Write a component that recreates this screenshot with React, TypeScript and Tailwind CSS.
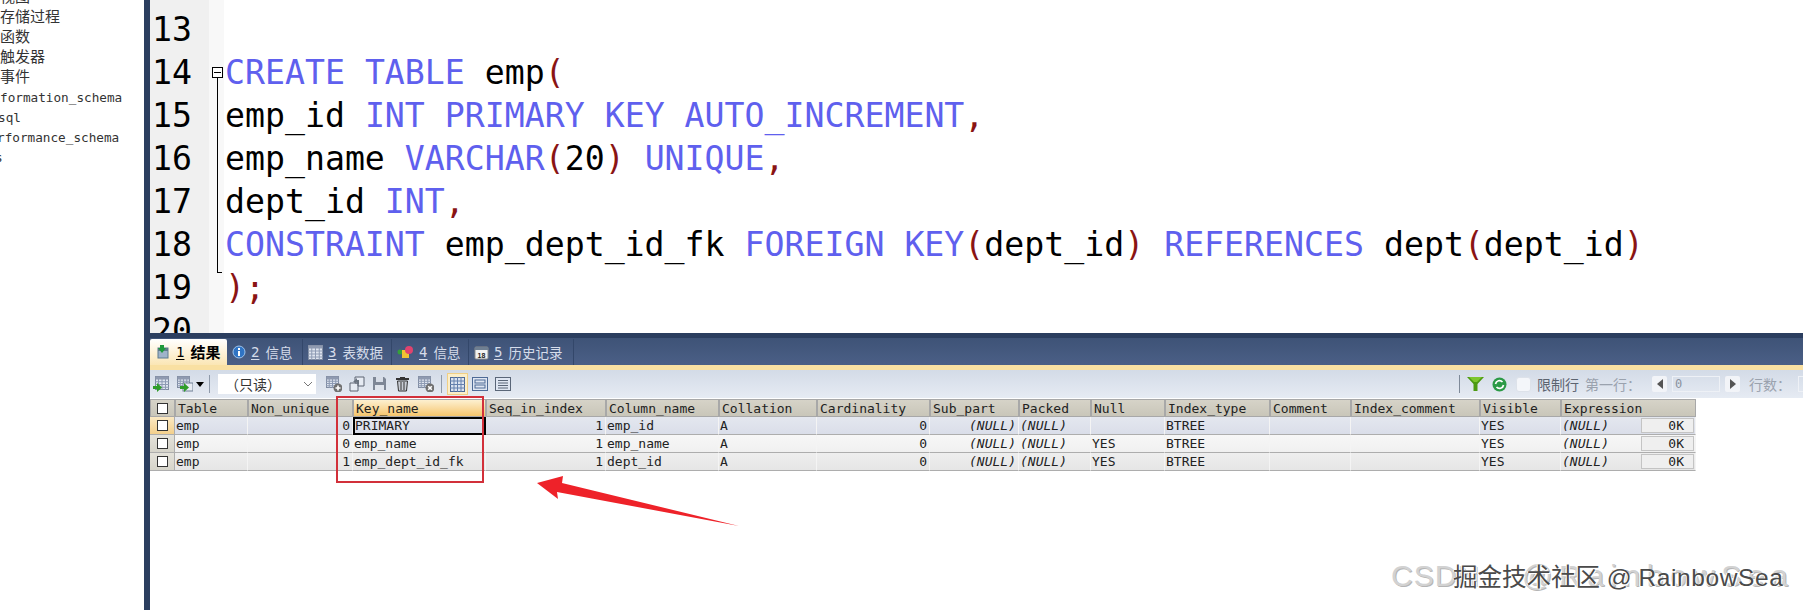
import React from "react";

const MONO = "font-['DejaVu_Sans_Mono','Noto_Sans_CJK_SC',monospace]";
const GRID =
  "grid grid-cols-[25px_73px_105px_133px_120px_113px_98px_113px_89px_72px_74px_105px_81px_129px_81px_135px]";

const K = ({ children }: { children: React.ReactNode }) => <span className="text-[#5f60ee]">{children}</span>;
const P = ({ children }: { children: React.ReactNode }) => <span className="text-[#8a1414]">{children}</span>;

const codeLines: React.ReactNode[] = [
  <>&nbsp;</>,
  <><K>CREATE</K> <K>TABLE</K> emp<P>(</P></>,
  <>emp_id <K>INT</K> <K>PRIMARY</K> <K>KEY</K> <K>AUTO_INCREMENT</K><P>,</P></>,
  <>emp_name <K>VARCHAR</K><P>(</P>20<P>)</P> <K>UNIQUE</K><P>,</P></>,
  <>dept_id <K>INT</K><P>,</P></>,
  <><K>CONSTRAINT</K> emp_dept_id_fk <K>FOREIGN</K> <K>KEY</K><P>(</P>dept_id<P>)</P> <K>REFERENCES</K> dept<P>(</P>dept_id<P>)</P></>,
  <><P>);</P></>,
];

const headers = ["Table","Non_unique","Key_name","Seq_in_index","Column_name","Collation","Cardinality","Sub_part","Packed","Null","Index_type","Comment","Index_comment","Visible","Expression"];

const rows = [
  { bg: "bg-linear-to-b from-[#e4e7ef] to-[#dadee9]", vals: ["emp","0","PRIMARY","1","emp_id","A","0","(NULL)","(NULL)","","BTREE","","","YES","(NULL)"] },
  { bg: "bg-linear-to-b from-[#f7f7f7] to-[#f0f0f0]", vals: ["emp","0","emp_name","1","emp_name","A","0","(NULL)","(NULL)","YES","BTREE","","","YES","(NULL)"] },
  { bg: "bg-linear-to-b from-[#eeeeee] to-[#e6e6e6]", vals: ["emp","1","emp_dept_id_fk","1","dept_id","A","0","(NULL)","(NULL)","YES","BTREE","","","YES","(NULL)"] },
];

const RIGHT = new Set([1, 3, 6, 7]);
const ITALIC = new Set([7, 8, 14]);

function TableGlyph({ x = 0, y = 0, w = 15, h = 14 }: { x?: number; y?: number; w?: number; h?: number }) {
  const cols = [1, 2, 3].map((i) => x + (w * i) / 4);
  const rws = [1, 2, 3].map((i) => y + 3 + ((h - 3) * i) / 4);
  return (
    <g>
      <rect x={x + 0.5} y={y + 0.5} width={w - 1} height={h - 1} fill="#dfe5ef" stroke="#7f8ba0" />
      <rect x={x + 0.5} y={y + 0.5} width={w - 1} height={3} fill="#8f9ab0" />
      {cols.map((c) => <line key={c} x1={c} x2={c} y1={y + 3} y2={y + h} stroke="#8d9ab3" />)}
      {rws.map((r) => <line key={r} x1={x} x2={x + w} y1={r} y2={r} stroke="#8d9ab3" />)}
    </g>
  );
}

const GreenArrow = ({ x, y }: { x: number; y: number }) => (
  <path transform={`translate(${x} ${y})`} d="M0 3h4V0l5 4.5L4 9V6H0z" fill="#2f9d2a" />
);

function Ic({ w = 16, h = 16, className = "", children }: { w?: number; h?: number; className?: string; children: React.ReactNode }) {
  return <svg width={w} height={h} viewBox={`0 0 ${w} ${h}`} className={"block shrink-0 " + className}>{children}</svg>;
}

function Badge({ kind }: { kind: "plus" | "x" }) {
  return (
    <g>
      <circle cx="12" cy="12" r="4.5" fill="#707070" />
      {kind === "plus" ? (
        <path d="M12 9.5v5M9.5 12h5" stroke="#fff" strokeWidth="1.6" />
      ) : (
        <path d="M10.2 10.2l3.6 3.6M13.8 10.2l-3.6 3.6" stroke="#fff" strokeWidth="1.6" />
      )}
    </g>
  );
}

function Tab({ w, active, icon, n, label }: { w: string; active?: boolean; icon: React.ReactNode; n: string; label: string }) {
  return (
    <div className={`${w} h-full flex items-center shrink-0 ${active ? "bg-linear-to-b from-[#ffffff] to-[#fbe6b4] text-black font-bold pl-[7px] rounded-t-[2px]" : "border-r border-[#33476a] text-[#d5dcea] pl-[5px]"}`}>
      {icon}
      <span className={`${MONO} text-[14px] underline underline-offset-2 font-normal ${active ? "ml-[7px]" : "ml-[5px]"}`}>{n}</span>
      <span className={`ml-[6px] font-['Noto_Sans_CJK_SC',sans-serif] ${active ? "text-[15px]" : "text-[13.5px]"}`}>{label}</span>
    </div>
  );
}

export default function App() {
  return (
    <div className="relative flex w-[1803px] h-[610px] overflow-hidden bg-white">
      {/* sidebar */}
      <div className={`w-[144px] shrink-0 overflow-hidden -mt-[14px] text-[#333] ${MONO} text-[12.7px] leading-[20px]`}>
        <div className="font-['Noto_Sans_CJK_SC',sans-serif] text-[15px]">视图</div>
        <div className="font-['Noto_Sans_CJK_SC',sans-serif] text-[15px]">存储过程</div>
        <div className="font-['Noto_Sans_CJK_SC',sans-serif] text-[15px]">函数</div>
        <div className="font-['Noto_Sans_CJK_SC',sans-serif] text-[15px]">触发器</div>
        <div className="font-['Noto_Sans_CJK_SC',sans-serif] text-[15px]">事件</div>
        <div className="mt-[2px]">formation_schema</div>
        <div className="-ml-[2px]">sql</div>
        <div className="-ml-[3px]">rformance_schema</div>
        <div className="-ml-[5px]">s</div>
      </div>
      <div className="w-[6px] shrink-0 bg-[#2b3e5f]" />

      {/* main */}
      <div className="flex-1 min-w-0 flex flex-col">
        {/* editor */}
        <div className={`h-[333px] shrink-0 flex overflow-hidden ${MONO} text-[33.2px] leading-[43px] text-black`}>
          <div className="w-[59px] shrink-0 bg-[#f0f0f0] pt-[8px] pl-[2px]">
            {[13, 14, 15, 16, 17, 18, 19, 20].map((n) => <div key={n}>{n}</div>)}
          </div>
          <div className="relative w-[15px] shrink-0 bg-[#f8f8f8]">
            <div className="absolute left-[3px] top-[67px] w-[11px] h-[11px] border border-black bg-white flex items-center justify-center">
              <div className="w-[7px] h-px bg-black" />
            </div>
            <div className="absolute left-[8px] top-[78px] w-[5px] h-[195px] border-l border-b border-black" />
          </div>
          <div className="pt-[8px] pl-px whitespace-pre">
            {codeLines.map((l, i) => <div key={i}>{l}</div>)}
          </div>
        </div>

        {/* tabs */}
        <div className="h-[5px] shrink-0 bg-[#2b3e5f]" />
        <div className="h-[27px] shrink-0 flex pt-px bg-linear-to-b from-[#3e5377] to-[#4b5f86]">
          <Tab w="w-[77px]" active n="1" label="结果" icon={<Ic w={12} h={14}><rect x="1" y="3" width="10" height="10" fill="#9fb3c9" stroke="#5d7a90" /><rect x="1" y="3" width="10" height="3" fill="#5f7a8c" /><path d="M3 0h4v3h2L5 8 1 3h2z" fill="#1f9a3b" /></Ic>} />
          <Tab w="w-[76px]" n="2" label="信息" icon={<Ic w={14} h={14}><circle cx="7" cy="7" r="6" fill="#2f74c4" /><circle cx="7" cy="7" r="6" fill="none" stroke="#9fc4ec" /><rect x="6" y="6" width="2" height="5" fill="#fff" /><rect x="6" y="3" width="2" height="2" fill="#fff" /></Ic>} />
          <Tab w="w-[89px]" n="3" label="表数据" icon={<Ic w={15} h={15}><TableGlyph x={0} y={0} w={15} h={15} /></Ic>} />
          <Tab w="w-[77px]" n="4" label="信息" icon={<Ic w={17} h={14}><circle cx="3" cy="7" r="2.5" fill="#35a03a" /><rect x="5" y="5" width="7" height="8" fill="#f1c232" /><circle cx="12" cy="5" r="4" fill="#e0436e" /></Ic>} />
          <Tab w="w-[105px]" n="5" label="历史记录" icon={<Ic w={15} h={15}><rect x="1" y="2" width="13" height="12" rx="1" fill="#f2f2f2" stroke="#8c8c8c" /><rect x="1" y="2" width="13" height="3" fill="#6f7f92" /><text x="7.5" y="12.5" textAnchor="middle" fontSize="7" fontFamily="Liberation Sans" fontWeight="bold" fill="#222">18</text></Ic>} />
        </div>
        <div className="h-[5px] shrink-0 bg-[#f9e0a2]" />

        {/* toolbar */}
        <div className="h-[28px] shrink-0 flex items-center bg-linear-to-b from-[#d3dbe7] to-[#e6ebf3] font-['Noto_Sans_CJK_SC',sans-serif]">
          <Ic className="ml-[3px]"><TableGlyph x={2} y={0} w={14} h={14} /><GreenArrow x={0} y={7} /></Ic>
          <Ic className="ml-[8px]"><TableGlyph x={0} y={0} w={13} h={12} /><rect x="6" y="7" width="10" height="8" fill="#e8edf4" stroke="#6f7f95" /><GreenArrow x={3} y={7} /></Ic>
          <div className="ml-[3px] w-0 h-0 border-x-[4px] border-x-transparent border-t-[5px] border-t-black" />
          <div className="ml-[5px] w-px h-[18px] bg-[#8f9aaa]" />
          <div className="ml-[8px] w-[98px] h-[20px] bg-white flex items-center pl-[7px] text-[14px] text-[#333]">
            <span>（只读）</span>
            <svg width="10" height="6" viewBox="0 0 10 6" className="ml-[22px]"><path d="M1 1l4 4 4-4" fill="none" stroke="#777" /></svg>
          </div>
          <Ic className="ml-[10px]"><TableGlyph x={0} y={0} w={13} h={12} /><Badge kind="plus" /></Ic>
          <Ic className="ml-[7px]"><path d="M1 7h8v8H1zM6 1h9v9H9V7H6z" fill="#e6ebf3" stroke="#5c6572" /><path d="M4 6l4-4v2h2v4H8V6z" fill="#6b7480" /></Ic>
          <Ic w={15} className="ml-[7px]"><path d="M1 1h11l2 2v11H1z" fill="#7e8796" /><rect x="4" y="1" width="7" height="5" fill="#d7dde7" /><rect x="3" y="9" width="9" height="5" fill="#dfe4ec" /></Ic>
          <Ic w={15} className="ml-[8px]"><path d="M5 2V1h5v1h4v2H1V2z" fill="#333" /><path d="M2.5 5h10l-1 10h-8z" fill="#c9ced6" stroke="#333" /><path d="M6 6v8M9 6v8" stroke="#333" /></Ic>
          <Ic className="ml-[8px]"><TableGlyph x={0} y={0} w={13} h={12} /><Badge kind="x" /></Ic>
          <div className="ml-[7px] w-px h-[18px] bg-[#8f9aaa]" />
          <div className="ml-[5px] w-[21px] h-[22px] border border-[#f0cf85] bg-[#fbeec9] flex items-center justify-center">
            <Ic w={15} h={15}><rect x=".5" y=".5" width="14" height="14" fill="#dbe3f0" stroke="#4e6a96" /><path d="M4 0v15M7.5 0v15M11 0v15M0 4h15M0 7.5h15M0 11h15" stroke="#6480ad" /></Ic>
          </div>
          <Ic w={16} h={16} className="ml-[4px]"><rect x=".5" y="1.5" width="15" height="13" fill="#dfe6f2" stroke="#4e6a96" /><rect x="3" y="4" width="10" height="3" fill="none" stroke="#4e6a96" /><rect x="3" y="9" width="10" height="3" fill="none" stroke="#4e6a96" /></Ic>
          <Ic w={16} h={16} className="ml-[7px]"><rect x=".5" y="1.5" width="15" height="13" fill="#dfe6f2" stroke="#5a6678" /><path d="M3 4.5h10M3 7h10M3 9.5h10M3 12h10" stroke="#5a6678" /></Ic>

          <div className="ml-auto flex items-center">
            <div className="w-px h-[18px] bg-[#7f8a99]" />
            <Ic w={17} h={16} className="ml-[7px]"><path d="M0 1h17L10.5 8v7h-4V8z" fill="#4d9a12" /><path d="M2 1h13l-5 5H7z" fill="#7dc62c" /></Ic>
            <Ic w={15} h={15} className="ml-[8px]"><circle cx="7.5" cy="7.5" r="7" fill="#2b9a46" /><path d="M3.5 7a4 4 0 0 1 7-2M11.5 8a4 4 0 0 1-7 2" fill="none" stroke="#fff" strokeWidth="1.7" /></Ic>
            <div className="ml-[9px] w-[15px] h-[15px] rounded-[3px] bg-[#f4f6fa] border border-[#dde2ea]" />
            <span className="ml-[6px] text-[14px] text-[#5c6470]">限制行</span>
            <span className="ml-[6px] text-[14px] text-[#9aa2ae] w-[54px] whitespace-nowrap">第一行：</span>
            <div className="ml-[13px] w-[15px] h-[16px] bg-[#f2f4f8] rounded-[2px] flex items-center justify-center"><div className="w-0 h-0 border-y-[5px] border-y-transparent border-r-[6px] border-r-[#555]" /></div>
            <div className={`ml-[5px] w-[48px] h-[16px] border border-[#eef1f6] text-[12px] leading-[14px] pl-[2px] text-[#8a929e] ${MONO}`}>0</div>
            <div className="ml-[5px] w-[15px] h-[16px] bg-[#f2f4f8] rounded-[2px] flex items-center justify-center"><div className="w-0 h-0 border-y-[5px] border-y-transparent border-l-[6px] border-l-[#555]" /></div>
            <span className="ml-[9px] text-[14px] text-[#9aa2ae] w-[36px] whitespace-nowrap">行数：</span>
            <div className="ml-[13px] w-[5px] h-[16px] border-l border-y border-[#eef1f6]" />
          </div>
        </div>

        {/* results */}
        <div className={`mt-px ${MONO} text-[13px] leading-[17px] text-[#222]`}>
          <div className={`${GRID} w-max h-[18px]`}>
            <div className="bg-linear-to-b from-[#d6d3c8] to-[#c9c6b9] border border-[#a8a8a8] flex items-center justify-center">
              <div className="w-[11px] h-[11px] bg-white border border-[#333]" />
            </div>
            {headers.map((h) => (
              <div key={h} className={`border border-[#a8a8a8] pl-[2px] whitespace-nowrap overflow-hidden ${h === "Key_name" ? "bg-linear-to-b from-[#fdf0d0] to-[#f5c56a]" : "bg-linear-to-b from-[#d6d3c8] to-[#c9c6b9]"}`}>{h}</div>
            ))}
          </div>
          {rows.map((r, ri) => (
            <div key={ri} className={`${GRID} w-max h-[18px]`}>
              <div className={`border-r border-b border-[#adadad] flex items-center justify-center ${ri === 0 ? "bg-linear-to-b from-[#fbe9c2] to-[#f3cf8c]" : "bg-linear-to-b from-[#e4e2da] to-[#d6d4ca]"}`}>
                <div className="w-[11px] h-[11px] bg-white border border-[#333]" />
              </div>
              {r.vals.map((v, ci) => {
                const selected = ri === 0 && ci === 2;
                return (
                  <div
                    key={ci}
                    className={`relative whitespace-nowrap overflow-visible h-[18px] ${r.bg} ${
                      selected ? "border-2 border-black pl-0 leading-[14px]" : "border-b border-r border-b-[#adadad] border-r-[#f4f4f4] pl-px"
                    } ${RIGHT.has(ci) ? "text-right pr-[2px]" : ""} ${ITALIC.has(ci) ? "italic" : ""}`}
                  >
                    {v}
                    {ci === 14 && (
                      <span className="absolute right-px top-px w-[53px] h-[15px] border border-[#c4c4c4] bg-[#efefef] not-italic text-right pr-[9px] leading-[13px]">0K</span>
                    )}
                  </div>
                );
              })}
            </div>
          ))}
        </div>
      </div>

      {/* annotation: red box */}
      <div className="absolute left-[336px] top-[396px] w-[148px] h-[87px] border-2 border-[#d2303a]" />
      {/* annotation: arrow */}
      <svg className="absolute left-0 top-0 pointer-events-none" width="1803" height="610" viewBox="0 0 1803 610">
        <polygon points="537,483 563,476 562,483 739,526 557,492 558,499" fill="#ee2229" />
      </svg>

      {/* watermarks */}
      <div className="absolute left-[1391px] top-[556px] font-['Liberation_Sans',sans-serif] text-[30px] leading-[40px] whitespace-nowrap text-[#d2d2d2] [text-shadow:1px_1px_0_#b5b5b5]">
        <span className="tracking-[1px]">CSDN</span>
        <span className="ml-[42px] tracking-[6.5px]">@RainbowSea</span>
      </div>
      <div className="absolute left-[1453px] top-[560px] font-['Liberation_Sans','Noto_Sans_CJK_SC',sans-serif] text-[24.5px] leading-[36px] whitespace-nowrap text-[#4a4a4a] [text-shadow:1px_1px_0_#ffffff,-1px_0_0_#ffffff]">
        掘金技术社区 @ <span className="tracking-[0.6px]">RainbowSea</span>
      </div>
    </div>
  );
}
